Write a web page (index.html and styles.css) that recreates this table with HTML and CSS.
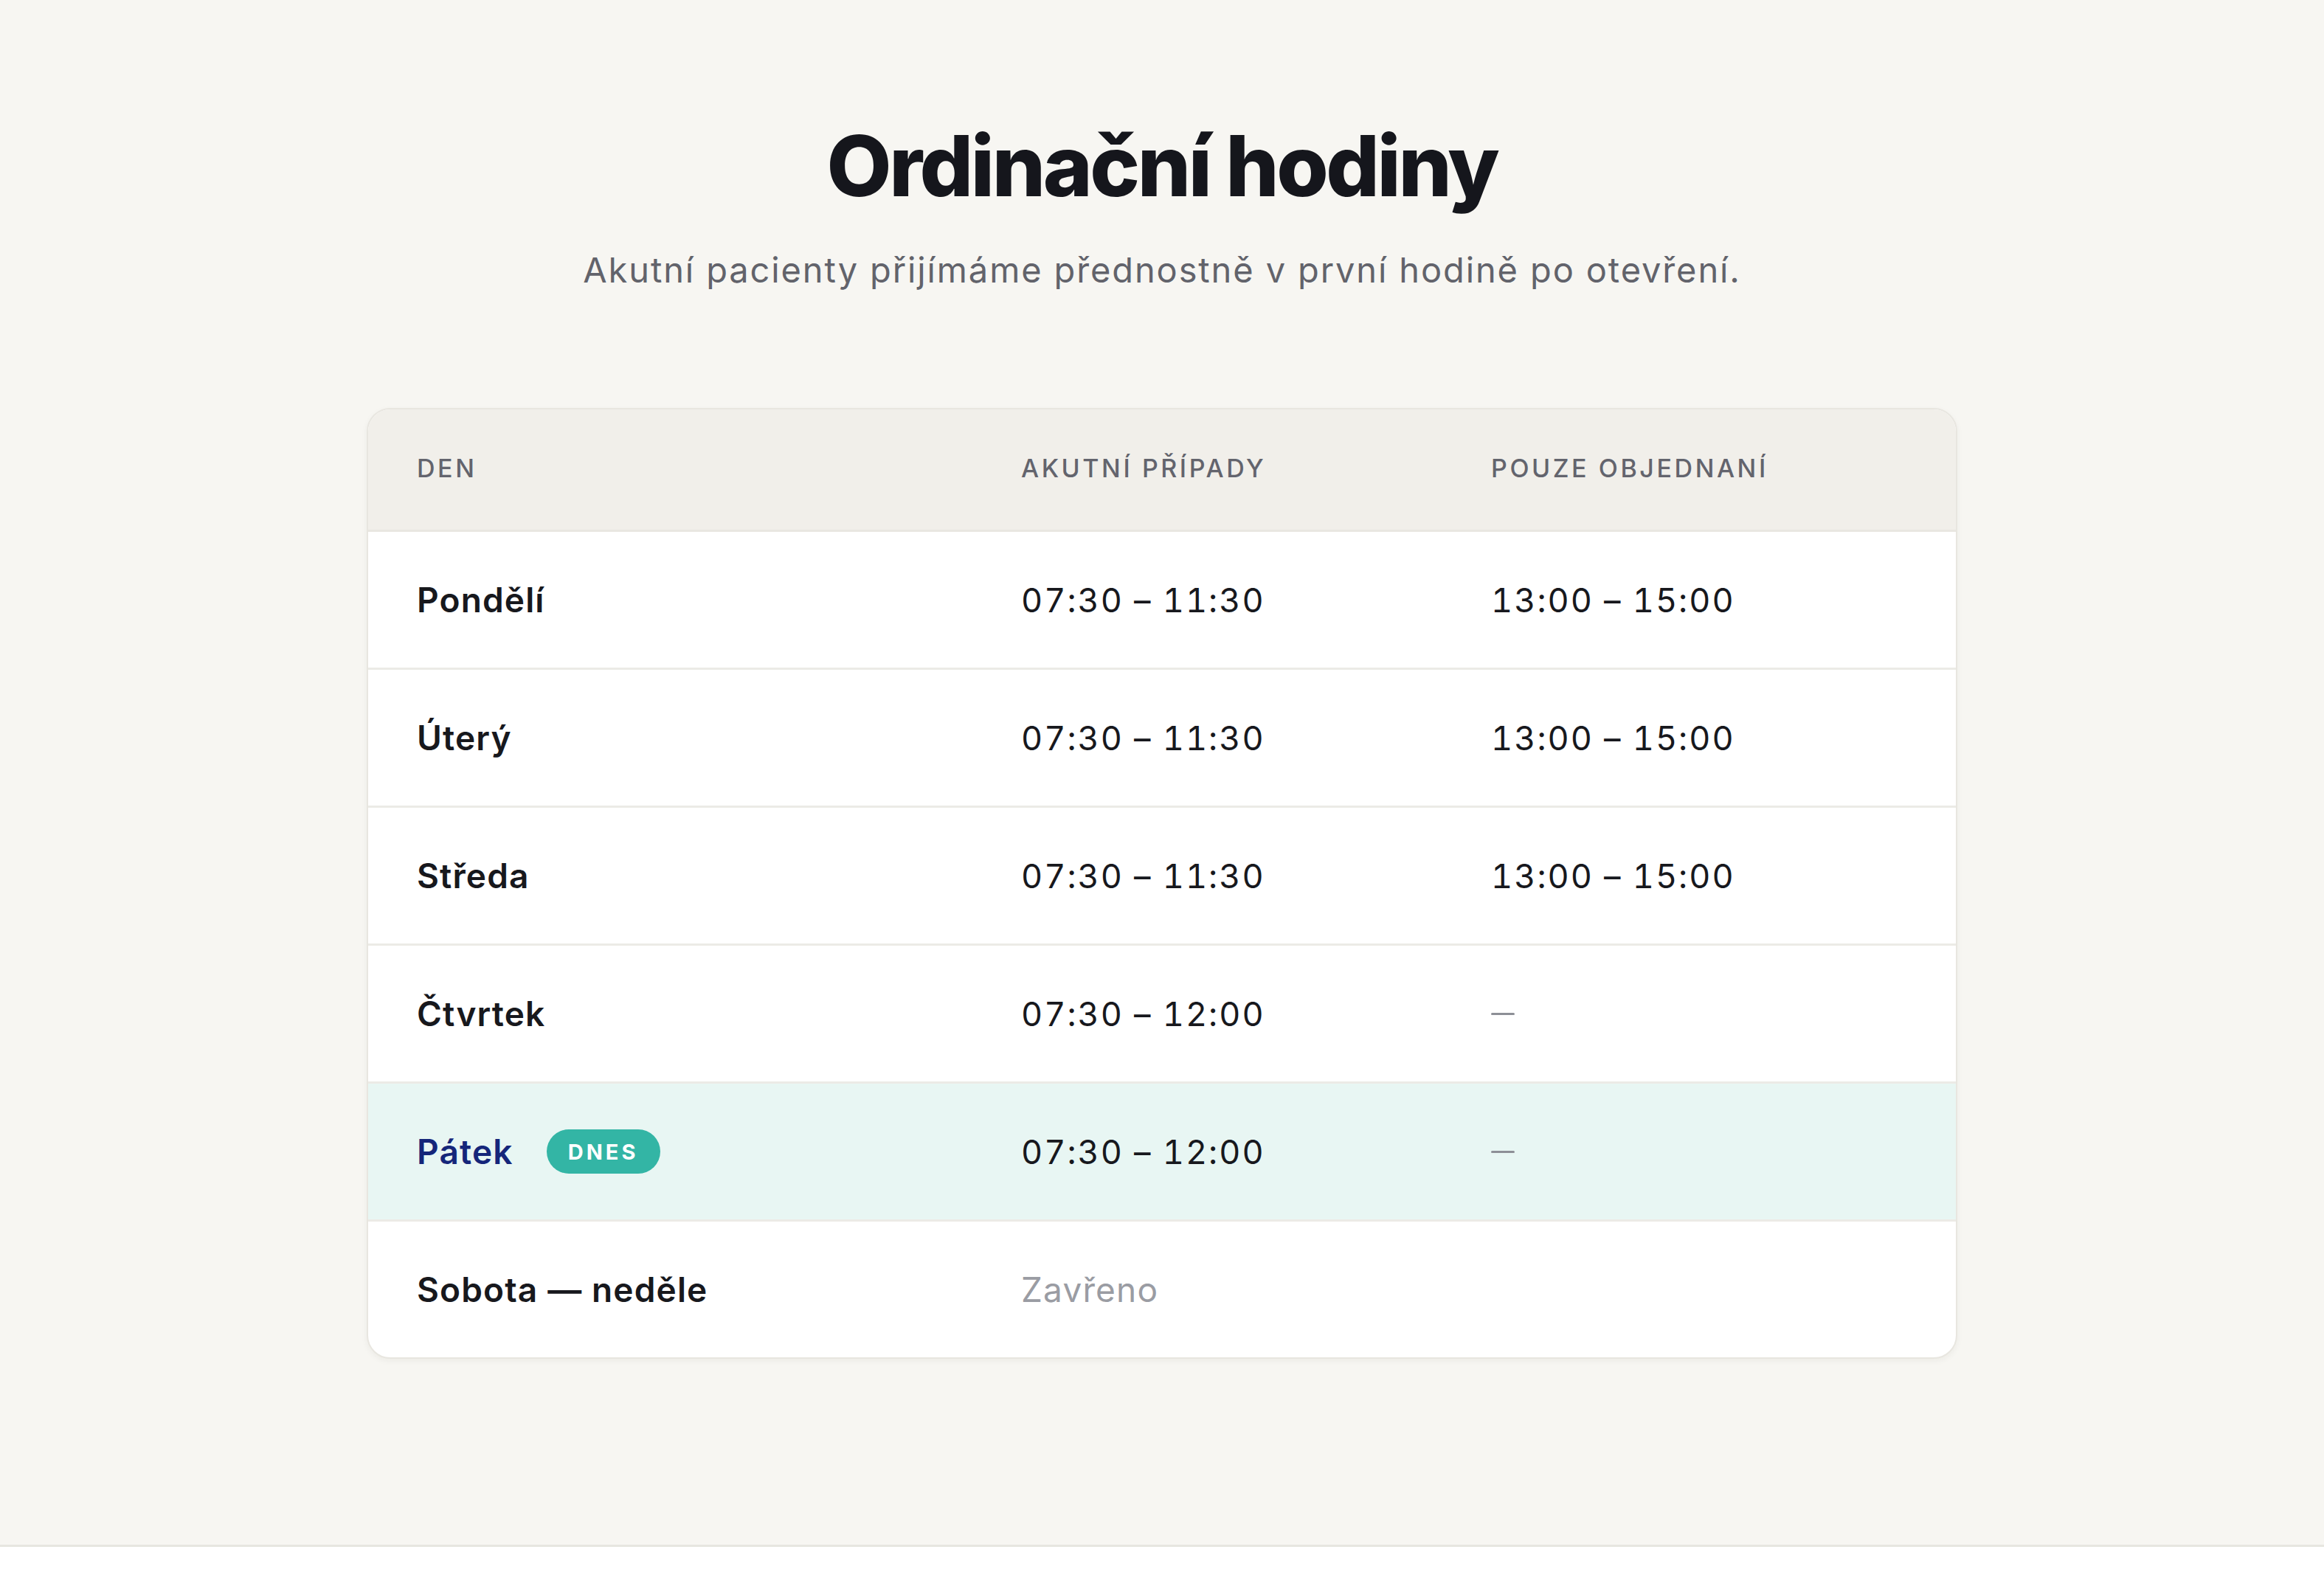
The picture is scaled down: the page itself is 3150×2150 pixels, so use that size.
FILE: index.html
```html
<!DOCTYPE html>
<html lang="cs">
<head>
<meta charset="utf-8">
<title>Ordinační hodiny</title>
<link rel="stylesheet" href="styles.css">
</head>
<body>
<section class="hours">
  <h1 class="title">Ordinační hodiny</h1>
  <p class="subtitle">Akutní pacienty přijímáme přednostně v první hodině po otevření.</p>
  <div class="card">
    <div class="row head">
      <div class="cell">DEN</div>
      <div class="cell">AKUTNÍ PŘÍPADY</div>
      <div class="cell">POUZE OBJEDNANÍ</div>
    </div>
    <div class="row">
      <div class="cell day">Pondělí</div>
      <div class="cell time">07:30 – 11:30</div>
      <div class="cell time">13:00 – 15:00</div>
    </div>
    <div class="row">
      <div class="cell day">Úterý</div>
      <div class="cell time">07:30 – 11:30</div>
      <div class="cell time">13:00 – 15:00</div>
    </div>
    <div class="row">
      <div class="cell day">Středa</div>
      <div class="cell time">07:30 – 11:30</div>
      <div class="cell time">13:00 – 15:00</div>
    </div>
    <div class="row">
      <div class="cell day">Čtvrtek</div>
      <div class="cell time">07:30 – 12:00</div>
      <div class="cell none"><span class="dash"></span></div>
    </div>
    <div class="row today">
      <div class="cell day"><span class="day-name">Pátek</span><span class="badge">DNES</span></div>
      <div class="cell time">07:30 – 12:00</div>
      <div class="cell none"><span class="dash"></span></div>
    </div>
    <div class="row last">
      <div class="cell day">Sobota — neděle</div>
      <div class="cell closed">Zavřeno</div>
      <div class="cell"></div>
    </div>
  </div>
</section>
</body>
</html>
```

FILE: styles.css
```css
html, body {
  margin: 0;
  padding: 0;
  background: #ffffff;
}
body {
  font-family: Inter, "Noto Sans", sans-serif;
  color: #17181d;
}
.hours {
  background: #f7f6f2;
  border-bottom: 3px solid #e7e6e0;
  padding: 161px 0 252px;
  display: flex;
  flex-direction: column;
  align-items: center;
}
.title {
  margin: 0;
  font-size: 114px;
  line-height: 128px;
  font-weight: 800;
  letter-spacing: -0.03em;
  color: #15161c;
}
.subtitle {
  margin: 42px 0 0;
  font-size: 47px;
  line-height: 69px;
  font-weight: 400;
  color: #62636b;
  letter-spacing: 0.04em;
}
.card {
  margin-top: 153px;
  width: 2156px;
  box-sizing: border-box;
  background: #ffffff;
  border: 2px solid #e8e6e0;
  border-radius: 32px;
  overflow: hidden;
  box-shadow: 0 3px 8px rgba(40, 35, 20, 0.05);
}
.row {
  display: grid;
  grid-template-columns: 819px 637px 1fr;
  align-items: center;
  height: 184px;
  border-bottom: 3px solid #ecebe6;
}
.row.last {
  border-bottom: none;
}
.row.head {
  height: 163px;
  background: #f1efea;
  border-bottom: 3px solid #e9e7e1;
}
.cell {
  padding-left: 66px;
  display: flex;
  align-items: center;
}
.head .cell {
  padding-bottom: 4px;
  font-size: 34px;
  font-weight: 500;
  letter-spacing: 0.105em;
  color: #63646d;
}
.day {
  font-size: 46px;
  font-weight: 600;
  color: #17181d;
  letter-spacing: 0.025em;
}
.time {
  font-size: 45px;
  font-weight: 400;
  color: #17181d;
  font-variant-numeric: tabular-nums;
  letter-spacing: 0.045em;
}
.none {
  height: 60px;
}
.dash {
  display: block;
  width: 32px;
  height: 3px;
  border-radius: 2px;
  background: #8d8f96;
}
.closed {
  font-size: 46px;
  color: #9a9ca3;
  letter-spacing: 0.025em;
}
.row.today {
  background: #e8f6f3;
}
.today .day-name {
  color: #15267a;
}
.badge {
  margin-left: 45px;
  height: 60px;
  padding: 0 29px;
  border-radius: 30px;
  background: #33b5a5;
  color: #ffffff;
  font-size: 29px;
  font-weight: 700;
  letter-spacing: 0.14em;
  display: inline-flex;
  align-items: center;
}
```
